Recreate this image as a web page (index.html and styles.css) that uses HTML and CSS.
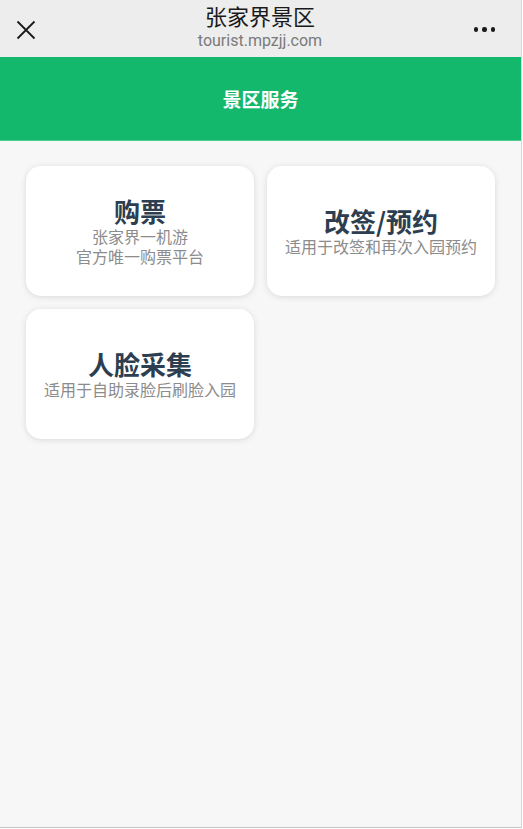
FILE: index.html
```html
<!DOCTYPE html>
<html lang="zh">
<head>
<meta charset="utf-8">
<link rel="stylesheet" href="styles.css">
</head>
<body>
<div class="frame">
  <header class="topbar">
    <div class="close">
      <svg width="20" height="20" viewBox="0 0 20 20"><path d="M1.5 1.5 L18.5 18.5 M18.5 1.5 L1.5 18.5" stroke="#1a1a1a" stroke-width="1.8" fill="none"/></svg>
    </div>
    <div class="titles">
      <div class="title">张家界景区</div>
      <div class="url">tourist.mpzjj.com</div>
    </div>
    <div class="more"><span></span><span></span><span></span></div>
  </header>
  <div class="banner">景区服务</div>
  <main class="grid">
    <div class="card">
      <div class="card-title">购票</div>
      <div class="card-sub">张家界一机游<br>官方唯一购票平台</div>
    </div>
    <div class="card">
      <div class="card-title">改签/预约</div>
      <div class="card-sub">适用于改签和再次入园预约</div>
    </div>
    <div class="card">
      <div class="card-title">人脸采集</div>
      <div class="card-sub">适用于自助录脸后刷脸入园</div>
    </div>
  </main>
</div>
</body>
</html>
```
FILE: styles.css
```css
* { box-sizing: border-box; }
html, body { margin: 0; padding: 0; }
body {
  width: 523px;
  height: 829px;
  background: #fff;
  font-family: "Noto Sans CJK SC", "Noto Sans", sans-serif;
  overflow: hidden;
}
.frame {
  width: 522px;
  height: 828px;
  background: #f7f7f7;
  border-right: 1px solid #d8d8d8;
  border-bottom: 1px solid #c4c4c4;
  display: flex;
  flex-direction: column;
}
.topbar {
  height: 57px;
  background: #ededed;
  display: flex;
  align-items: center;
  justify-content: space-between;
  padding: 0 26px 0 16px;
  flex-shrink: 0;
}
.close { width: 20px; height: 20px; display: flex; margin-top: 2px; }
.titles {
  display: flex;
  flex-direction: column;
  align-items: center;
  margin-left: 10px;
}
.title {
  font-size: 22px;
  line-height: 26px;
  color: #1a1a1a;
  margin-top: -5px;
}
.url {
  font-family: Roboto, "Noto Sans", sans-serif;
  font-size: 16px;
  line-height: 20px;
  color: #7a7a7a;
  margin-top: 3px;
}
.more { display: flex; gap: 4px; width: 21px; margin-top: 2px; }
.more span {
  width: 4.5px; height: 4.5px; border-radius: 50%;
  background: #1a1a1a;
}
.banner {
  height: 84px;
  background: #13b86d;
  border-bottom: 1px solid #4fcc92;
  color: #fff;
  font-weight: 700;
  font-size: 19px;
  display: flex;
  align-items: center;
  justify-content: center;
  flex-shrink: 0;
}
.grid {
  display: grid;
  grid-template-columns: 228px 228px;
  gap: 13px;
  padding: 25px 0 0 26px;
  align-content: start;
}
.card {
  height: 130px;
  background: #fff;
  border-radius: 15px;
  box-shadow: 0 1px 6px rgba(0,0,0,0.12);
  display: flex;
  flex-direction: column;
  align-items: center;
  justify-content: center;
  text-align: center;
}
.card-title {
  font-size: 26px;
  font-weight: 700;
  color: #2c3e50;
  line-height: 30px;
}
.card-sub {
  font-size: 16px;
  color: #8c8c8c;
  line-height: 20px;
}
```
